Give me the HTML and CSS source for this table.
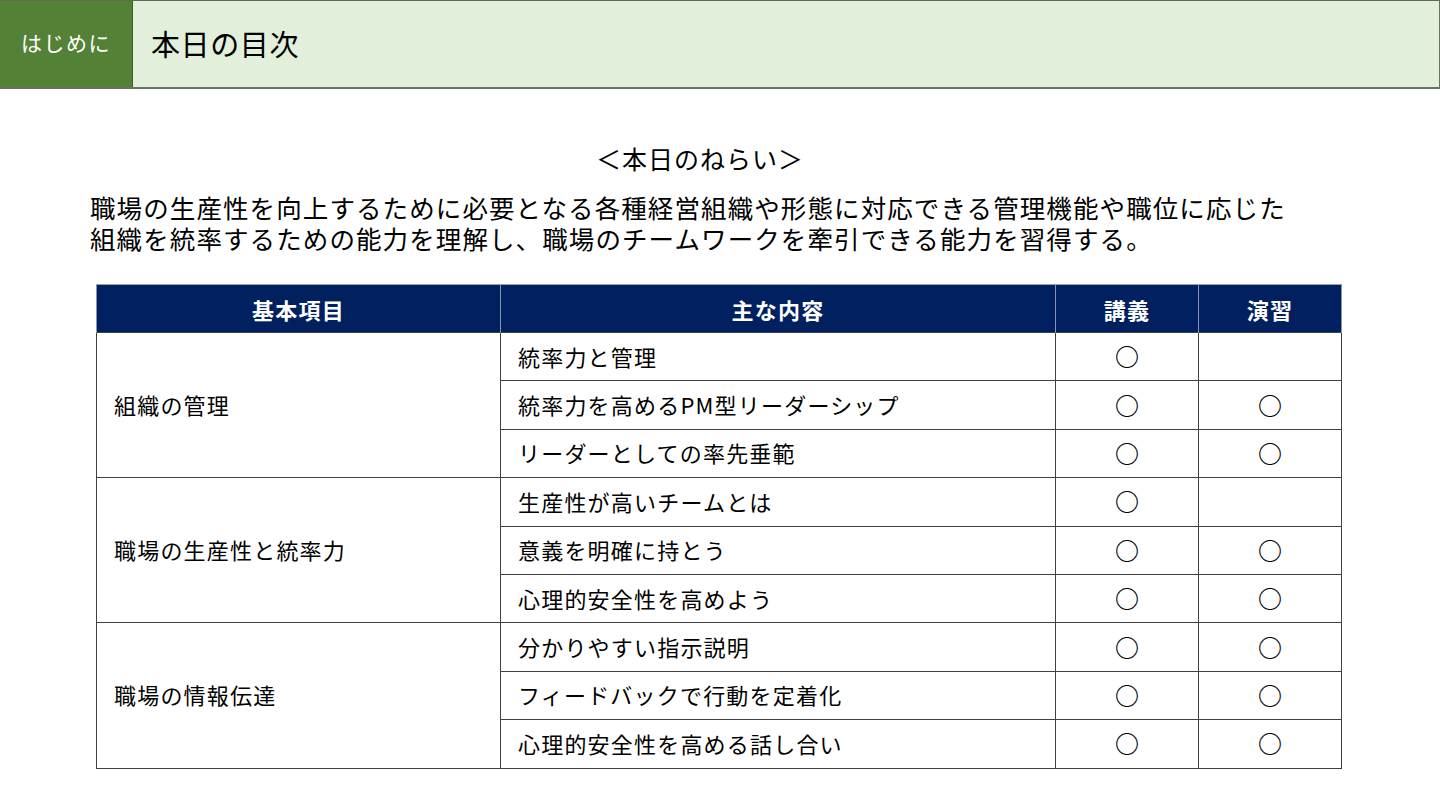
FILE: index.html
```html
<!DOCTYPE html>
<html lang="ja">
<head>
<meta charset="utf-8">
<link rel="stylesheet" href="styles.css">
</head>
<body>
<header class="top">
  <div class="tag">はじめに</div>
  <div class="title">本日の目次</div>
</header>
<main class="content">
  <h2 class="sub">＜本日のねらい＞</h2>
  <p class="lead"><span class="ln">職場の生産性を向上するために必要となる各種経営組織や形態に対応できる管理機能や職位に応じた</span><span class="ln">組織を統率するための能力を理解し、職場のチームワークを牽引できる能力を習得する。</span></p>
  <table class="grid">
    <colgroup><col class="c1"><col class="c2"><col class="c3"><col class="c4"></colgroup>
    <thead>
      <tr><th>基本項目</th><th>主な内容</th><th>講義</th><th>演習</th></tr>
    </thead>
    <tbody>
      <tr><td rowspan="3" class="cat">組織の管理</td><td>統率力と管理</td><td class="mk">○</td><td class="mk"></td></tr>
      <tr><td>統率力を高めるPM型リーダーシップ</td><td class="mk">○</td><td class="mk">○</td></tr>
      <tr><td>リーダーとしての率先垂範</td><td class="mk">○</td><td class="mk">○</td></tr>
      <tr><td rowspan="3" class="cat">職場の生産性と統率力</td><td>生産性が高いチームとは</td><td class="mk">○</td><td class="mk"></td></tr>
      <tr><td>意義を明確に持とう</td><td class="mk">○</td><td class="mk">○</td></tr>
      <tr><td>心理的安全性を高めよう</td><td class="mk">○</td><td class="mk">○</td></tr>
      <tr><td rowspan="3" class="cat">職場の情報伝達</td><td>分かりやすい指示説明</td><td class="mk">○</td><td class="mk">○</td></tr>
      <tr><td>フィードバックで行動を定着化</td><td class="mk">○</td><td class="mk">○</td></tr>
      <tr><td>心理的安全性を高める話し合い</td><td class="mk">○</td><td class="mk">○</td></tr>
    </tbody>
  </table>
</main>
</body>
</html>
```

FILE: styles.css
```css
* { box-sizing: border-box; }
html, body { margin: 0; padding: 0; }
body {
  width: 1440px;
  height: 810px;
  background: #ffffff;
  font-family: "Noto Sans CJK JP", "Noto Sans", sans-serif;
  color: #000;
  overflow: hidden;
}
.top {
  display: flex;
  height: 89px;
  border-top: 1px solid #5f6b58;
  border-bottom: 2px solid #6b7264;
  border-right: 1px solid #6b7264;
  background: #e2efda;
}
.tag {
  width: 133px;
  background: #538135;
  border-right: 1px solid #3f5f2a;
  color: #fff;
  font-size: 21px;
  letter-spacing: 1.5px;
  display: flex;
  align-items: center;
  justify-content: center;
  padding-bottom: 4px;
}
.title {
  padding-left: 18px;
  font-size: 29px;
  letter-spacing: 0.6px;
  display: flex;
  align-items: center;
  padding-bottom: 2px;
}
.content {
  padding: 0 0 0 90px;
}
.sub {
  margin: 52px 0 0 0;
  font-size: 25px;
  letter-spacing: 1px;
  font-weight: normal;
  text-align: center;
  width: 1220px;
  line-height: 34px;
}
.lead {
  margin: 16px 0 0 0;
  font-size: 25.5px;
  letter-spacing: 1.1px;
  white-space: nowrap;
}
.ln {
  display: block;
  height: 31px;
  line-height: 31px;
}
.grid {
  margin: 31px 0 0 6px;
  border-collapse: collapse;
  width: 1245px;
  table-layout: fixed;
  font-size: 22px;
  letter-spacing: 1.2px;
}
.c1 { width: 404px; }
.c2 { width: 555px; }
.c3 { width: 143px; }
.c4 { width: 143px; }
.grid th {
  background: #002060;
  color: #fff;
  font-weight: bold;
  height: 48px;
  border-left: 1px solid #8a93b0;
  border-right: 1px solid #8a93b0;
  border-top: 1px solid #9aa0b0;
  padding: 0;
  text-align: center;
}
.grid td {
  height: 48.4px;
  border: 1px solid #404040;
  padding: 0 0 2px 17px;
  vertical-align: middle;
  white-space: nowrap;
}
.grid td.mk {
  text-align: center;
  padding: 0 0 2px 0;
  font-size: 24px;
  font-weight: bold;
  letter-spacing: 0;
}
```
